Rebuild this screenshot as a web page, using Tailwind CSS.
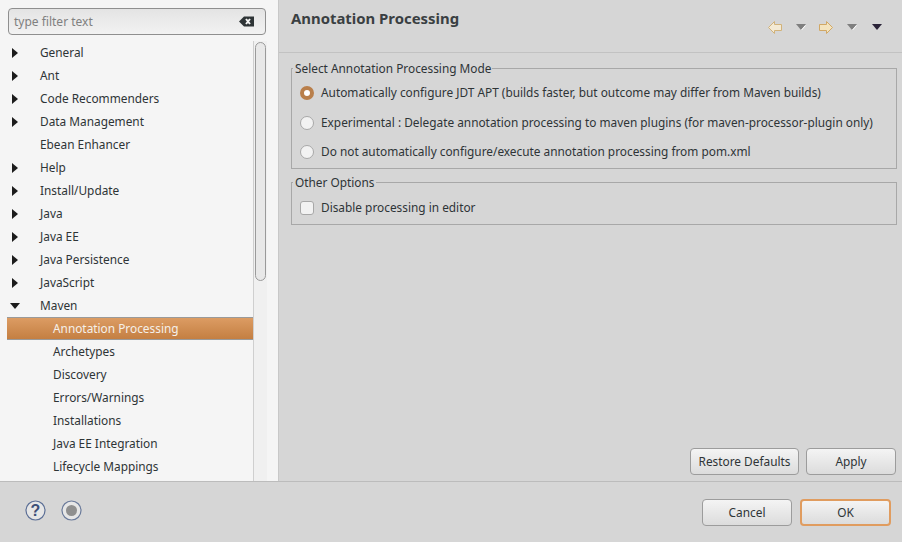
<!DOCTYPE html>
<html lang="en">
<head>
    <meta charset="UTF-8">
    <title>Preferences</title>
    <script src="https://cdn.jsdelivr.net/npm/@tailwindcss/browser@4"></script>
</head>
<body class="w-[902px] h-[542px] overflow-hidden bg-[#d6d6d6] text-[#2e3436] text-[11.85px] font-['Noto_Sans',sans-serif] flex flex-col">
    <div class="h-[482px] flex border-b border-[#bcbcbc] shrink-0">
        <!-- left tree -->
        <div class="w-[279px] h-full bg-[#f5f5f5] border-r border-[#c8c8c8] pl-[8px] pt-[8px] shrink-0 flex flex-col overflow-hidden">
            <div class="w-[258px] h-[27px] border border-[#8f8f8f] rounded-[4px] bg-gradient-to-b from-[#e4e4e4] to-[#f2f2f2] flex items-center justify-between pl-[5px] pr-[11px] shrink-0">
                <span class="text-[#808080] text-[12px]">type filter text</span>
                <svg width="15" height="11" viewBox="0 0 15 11"><path d="M0 5.500L5 0.500H15V10.500H5Z" fill="#2e3436"/><path d="M7 3L11 8M11 3L7 8" stroke="#f5f5f5" stroke-width="2"/></svg>
            </div>
            <div class="flex ml-[-1px] mt-[6px] flex-1 min-h-0">
                <div class="w-[246px] shrink-0 leading-[23px]">
                    <div class="h-[23px] flex items-center"><svg class="ml-[5px] mr-[22px]" width="6" height="10" viewBox="0 0 6 10"><path d="M0 0L6 5L0 10Z" fill="#1c1c1c"/></svg><span>General</span></div>
                    <div class="h-[23px] flex items-center"><svg class="ml-[5px] mr-[22px]" width="6" height="10" viewBox="0 0 6 10"><path d="M0 0L6 5L0 10Z" fill="#1c1c1c"/></svg><span>Ant</span></div>
                    <div class="h-[23px] flex items-center"><svg class="ml-[5px] mr-[22px]" width="6" height="10" viewBox="0 0 6 10"><path d="M0 0L6 5L0 10Z" fill="#1c1c1c"/></svg><span>Code Recommenders</span></div>
                    <div class="h-[23px] flex items-center"><svg class="ml-[5px] mr-[22px]" width="6" height="10" viewBox="0 0 6 10"><path d="M0 0L6 5L0 10Z" fill="#1c1c1c"/></svg><span>Data Management</span></div>
                    <div class="h-[23px] flex items-center pl-[33px]"><span>Ebean Enhancer</span></div>
                    <div class="h-[23px] flex items-center"><svg class="ml-[5px] mr-[22px]" width="6" height="10" viewBox="0 0 6 10"><path d="M0 0L6 5L0 10Z" fill="#1c1c1c"/></svg><span>Help</span></div>
                    <div class="h-[23px] flex items-center"><svg class="ml-[5px] mr-[22px]" width="6" height="10" viewBox="0 0 6 10"><path d="M0 0L6 5L0 10Z" fill="#1c1c1c"/></svg><span>Install/Update</span></div>
                    <div class="h-[23px] flex items-center"><svg class="ml-[5px] mr-[22px]" width="6" height="10" viewBox="0 0 6 10"><path d="M0 0L6 5L0 10Z" fill="#1c1c1c"/></svg><span>Java</span></div>
                    <div class="h-[23px] flex items-center"><svg class="ml-[5px] mr-[22px]" width="6" height="10" viewBox="0 0 6 10"><path d="M0 0L6 5L0 10Z" fill="#1c1c1c"/></svg><span>Java EE</span></div>
                    <div class="h-[23px] flex items-center"><svg class="ml-[5px] mr-[22px]" width="6" height="10" viewBox="0 0 6 10"><path d="M0 0L6 5L0 10Z" fill="#1c1c1c"/></svg><span>Java Persistence</span></div>
                    <div class="h-[23px] flex items-center"><svg class="ml-[5px] mr-[22px]" width="6" height="10" viewBox="0 0 6 10"><path d="M0 0L6 5L0 10Z" fill="#1c1c1c"/></svg><span>JavaScript</span></div>
                    <div class="h-[23px] flex items-center"><svg class="ml-[3px] mr-[20px]" width="10" height="6" viewBox="0 0 10 6"><path d="M0 0H10L5 6Z" fill="#1c1c1c"/></svg><span>Maven</span></div>
                    <div class="h-[23px] flex items-center pl-[46px] text-[#f5f0ea] border-y border-[#9a9a9a] bg-gradient-to-b from-[#dc9c63] to-[#c47f42]"><span>Annotation Processing</span></div>
                    <div class="h-[23px] flex items-center pl-[46px]"><span>Archetypes</span></div>
                    <div class="h-[23px] flex items-center pl-[46px]"><span>Discovery</span></div>
                    <div class="h-[23px] flex items-center pl-[46px]"><span>Errors/Warnings</span></div>
                    <div class="h-[23px] flex items-center pl-[46px]"><span>Installations</span></div>
                    <div class="h-[23px] flex items-center pl-[46px]"><span>Java EE Integration</span></div>
                    <div class="h-[23px] flex items-center pl-[46px]"><span>Lifecycle Mappings</span></div>
                </div>
                <div class="w-[14px] border-l border-[#cfcfcf] bg-[#f0f0f0] shrink-0">
                    <div class="w-[11px] h-[239px] ml-[1px] mt-[1px] border border-[#9a9a9a] rounded-[6px] bg-[#e8e8e8]"></div>
                </div>
            </div>
        </div>
        <!-- right page -->
        <div class="flex-1 min-w-0 flex flex-col">
            <div class="h-[53px] flex justify-between border-b border-[#c2c2c2] pl-[12px] pr-[20px] shrink-0">
                <h1 class="font-bold text-[14.9px] text-[#3a3f42] mt-[7px]">Annotation Processing</h1>
                <div class="flex items-center mt-[2px]">
                    <svg class="mr-[14px]" width="14" height="13" viewBox="0 0 14 13"><path d="M0.500 6.500L6.500 0.500V3.500H13.500V9.500H6.500V12.500Z" fill="#f4ead4" stroke="#d1b27a"/></svg>
                    <svg class="mr-[13px]" width="10" height="6" viewBox="0 0 10 6"><path d="M0 0H10L5 6Z" fill="#7f7f7f"/><path d="M5.500 6L9.500 1.500" stroke="#fff"/></svg>
                    <svg class="mr-[14px]" width="14" height="13" viewBox="0 0 14 13"><path d="M13.500 6.500L7.500 0.500V3.500H0.500V9.500H7.500V12.500Z" fill="#f4e4bf" stroke="#d1a866"/></svg>
                    <svg class="mr-[15px]" width="10" height="6" viewBox="0 0 10 6"><path d="M0 0H10L5 6Z" fill="#7f7f7f"/><path d="M5.500 6L9.500 1.500" stroke="#fff"/></svg>
                    <svg width="10" height="6" viewBox="0 0 10 6"><path d="M0 0H10L5 6Z" fill="#2a2338"/></svg>
                </div>
            </div>
            <div class="flex-1 pl-[12px] pr-[5px] pt-[8px] flex flex-col min-h-0">
                <fieldset class="border border-[#a8a8a8] h-[108px] pl-[8px] pr-0 min-w-0 whitespace-nowrap">
                    <legend class="ml-[-7px] px-[2px] pr-[1px] leading-[14px]">Select Annotation Processing Mode</legend>
                    <div class="flex items-center h-[23px] mt-[6px]">
                        <span class="w-[14px] h-[14px] rounded-full border-[4px] border-[#b97f4b] bg-white mr-[7px]"></span>
                        <span>Automatically configure JDT APT (builds faster, but outcome may differ from Maven builds)</span>
                    </div>
                    <div class="flex items-center h-[23px] mt-[7px]">
                        <span class="w-[14px] h-[14px] rounded-full border border-[#a8a8a8] bg-[#f2f2f2] mr-[7px]"></span>
                        <span>Experimental : Delegate annotation processing to maven plugins (for maven-processor-plugin only)</span>
                    </div>
                    <div class="flex items-center h-[23px] mt-[6px]">
                        <span class="w-[14px] h-[14px] rounded-full border border-[#a8a8a8] bg-[#f2f2f2] mr-[7px]"></span>
                        <span>Do not automatically configure/execute annotation processing from pom.xml</span>
                    </div>
                </fieldset>
                <fieldset class="border border-[#a8a8a8] h-[50px] mt-[6px] pl-[8px] min-w-0">
                    <legend class="ml-[-7px] px-[2px] pr-[1px] leading-[14px]">Other Options</legend>
                    <div class="flex items-center h-[23px] mt-[7px]">
                        <span class="w-[14px] h-[14px] rounded-[3px] border border-[#a8a8a8] bg-[#f2f2f2] mr-[7px]"></span>
                        <span>Disable processing in editor</span>
                    </div>
                </fieldset>
                <div class="mt-auto mb-[6px] mr-[1px] flex justify-end gap-[7px]">
                    <button class="w-[109px] h-[27px] border border-[#9c9c9c] rounded-[4px] bg-gradient-to-b from-[#f4f4f4] to-[#dcdcdc]">Restore Defaults</button>
                    <button class="w-[90px] h-[27px] border border-[#9c9c9c] rounded-[4px] bg-gradient-to-b from-[#f4f4f4] to-[#dcdcdc]">Apply</button>
                </div>
            </div>
        </div>
    </div>
    <!-- footer -->
    <div class="flex-1 flex items-center justify-between pl-[25px] pr-[11px]">
        <div class="flex items-center gap-[15px] mb-[3px]">
            <svg width="21" height="21" viewBox="0 0 21 21"><circle cx="10.500" cy="10.500" r="9.500" fill="#e6e6e6" stroke="#5c6f96" stroke-width="1.200"/><text x="10.500" y="16" text-anchor="middle" font-family="Liberation Sans" font-weight="700" font-size="16" fill="#3c4f78">?</text></svg>
            <svg width="21" height="21" viewBox="0 0 21 21"><circle cx="10.500" cy="10.500" r="9.500" fill="#e6e6e6" stroke="#6a7a9a" stroke-width="1.200"/><circle cx="10.500" cy="10.500" r="5.500" fill="#8f8f8f"/></svg>
        </div>
        <div class="flex gap-[8px] mt-[1px]">
            <button class="w-[90px] h-[27px] border border-[#9c9c9c] rounded-[4px] bg-gradient-to-b from-[#f4f4f4] to-[#dcdcdc]">Cancel</button>
            <button class="w-[91px] h-[27px] border-2 border-[#e09c5f] rounded-[4px] bg-gradient-to-b from-[#f4f4f4] to-[#dcdcdc]">OK</button>
        </div>
    </div>
</body>
</html>
